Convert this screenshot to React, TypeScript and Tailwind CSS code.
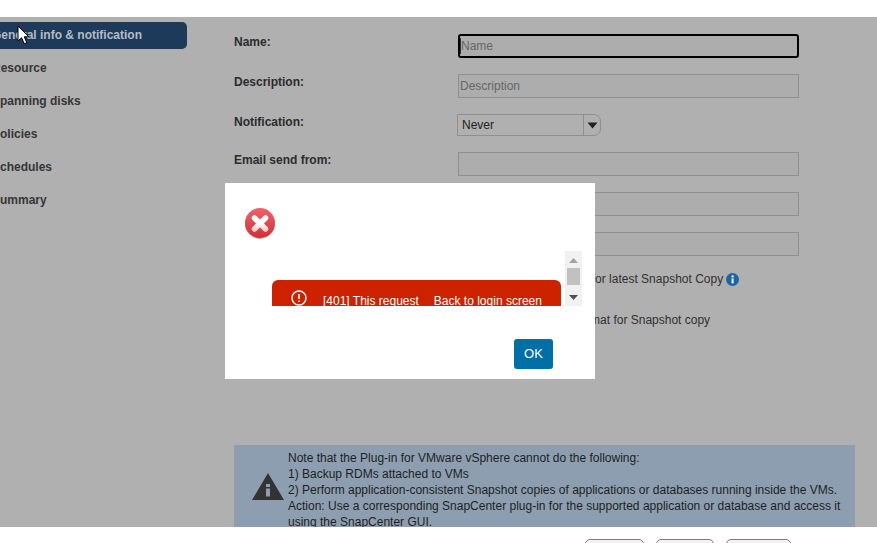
const sideItems = ["Resource", "Spanning disks", "Policies", "Schedules", "Summary"];

const Field = ({ label, placeholder }: { label: string; placeholder?: string }) => (
    <div className="flex items-start mb-[15px]">
        <label className="w-[224px] pt-px font-bold leading-4 text-[#2c2c2c]">{label}</label>
        <input
            placeholder={placeholder}
            className="w-[341px] h-6 mt-px px-[1px] border border-[#8f8f8f] bg-[#adadad] text-xs placeholder:text-[#666666]"
        />
    </div>
);

const ErrorIcon = () => (
    <svg width="32" height="32" viewBox="0 0 32 32">
        <defs>
            <linearGradient id="errorFill" x1="0" y1="0" x2="0" y2="1">
                <stop offset="0" stopColor="#f0636b" />
                <stop offset="1" stopColor="#cf2f36" />
            </linearGradient>
            <linearGradient id="crossFill" gradientUnits="userSpaceOnUse" x1="0" y1="8" x2="0" y2="25">
                <stop offset="0.5" stopColor="#ffffff" />
                <stop offset="1" stopColor="#f2bcbc" />
            </linearGradient>
        </defs>
        <circle cx="16" cy="17" r="15" fill="#b9b9b9" />
        <circle cx="16" cy="16" r="15" fill="url(#errorFill)" />
        <path d="M10.5 11 21.5 22M21.5 11 10.5 22" stroke="url(#crossFill)" strokeWidth="5.5" strokeLinecap="round" />
    </svg>
);

const App = () => {
    return (
        <div className="relative w-[877px] h-[543px] overflow-hidden bg-white text-xs text-[#2c2c2c] font-['Liberation_Sans',Arial,sans-serif]">
            <div className="h-[17px]"></div>

            <div className="flex h-[510px] overflow-hidden bg-[#b0b0b0]">
                <aside className="w-[234px] shrink-0 pt-[5px] -ml-[8px] font-bold">
                    <div className="w-[195px] h-[27px] rounded-[5px] bg-[#1d3a5a] text-[#b5bcc5] leading-[27px]">General info &amp; notification</div>
                    <ul className="mt-[3px]">
                        {sideItems.map((item) => (
                            <li key={item} className="h-[33px] leading-[33px] text-[#363636]">{item}</li>
                        ))}
                    </ul>
                </aside>

                <main className="flex-1 pl-[8px] pt-4">
                    <div className="flex items-start mb-[15px]">
                        <label className="w-[224px] pt-px font-bold leading-4">Name:</label>
                        <div className="relative mt-px">
                            <input
                                placeholder="Name"
                                className="w-[341px] h-6 px-[1px] border-2 border-black rounded-[3px] bg-[#adadad] text-xs placeholder:text-[#666666]"
                            />
                            <span className="absolute left-[2px] top-[4px] w-px h-4 bg-[#333333]"></span>
                        </div>
                    </div>
                    <Field label="Description:" placeholder="Description" />
                    <div className="flex items-start mb-[15px]">
                        <label className="w-[223px] pt-px font-bold leading-4">Notification:</label>
                        <div className="flex w-[144px] h-[22px] mt-px border border-[#8f8f8f] rounded-r-[7px]">
                            <div className="w-[126px] pl-1 leading-5 border-r border-[#8f8f8f] text-[#222222]">Never</div>
                            <div className="flex flex-1 items-center justify-center">
                                <svg width="11" height="7" viewBox="0 0 11 7">
                                    <path d="M0.5 0.5h10L5.5 6.5z" fill="#222222" />
                                </svg>
                            </div>
                        </div>
                    </div>
                    <Field label="Email send from:" />
                    <Field label="Email send to:" />
                    <Field label="Email subject:" />

                    <div className="flex items-center h-4 pl-[229px] mt-[2px] text-[#303030]">
                        <span>Recent Snapshot name for latest Snapshot Copy</span>
                        <svg className="ml-[3px]" width="13" height="13" viewBox="0 0 13 13">
                            <circle cx="6.5" cy="6.5" r="6.5" fill="#1b64a8" />
                            <rect x="5.6" y="2.4" width="2" height="2" fill="#ffffff" />
                            <rect x="5.6" y="5.4" width="2" height="5" fill="#ffffff" />
                        </svg>
                    </div>
                    <div className="h-4 mt-[25px] pl-[242px] leading-4 text-[#303030]">Use custom name format for Snapshot copy</div>

                    <div className="flex items-center w-[621px] h-[110px] mt-[117px] bg-[#8d9eb0] text-[#1f1f1f]">
                        <div className="w-[54px] shrink-0 pl-[18px] -mt-[28px]">
                            <svg width="32" height="28" viewBox="0 0 32 28">
                                <path fillRule="evenodd" fill="#333333" d="M16 1 32 28H0zM14 12v3h4v-3zM14 16.500v8h4v-8z" />
                            </svg>
                        </div>
                        <div className="self-start pt-[5px] leading-4">
                            <p>Note that the Plug-in for VMware vSphere cannot do the following:</p>
                            <p>1) Backup RDMs attached to VMs</p>
                            <p>2) Perform application-consistent Snapshot copies of applications or databases running inside the VMs.</p>
                            <p>Action: Use a corresponding SnapCenter plug-in for the supported application or database and access it using the SnapCenter GUI.</p>
                        </div>
                    </div>
                </main>
            </div>

            <div className="flex gap-3 pl-[585px] pt-3">
                <button className="w-[59px] h-8 shrink-0 border border-[#7c7c7c] rounded-[5px] bg-[#f2f2f2]">Back</button>
                <button className="w-[58px] h-8 shrink-0 border border-[#7c7c7c] rounded-[5px] bg-[#f2f2f2]">Next</button>
                <button className="w-[65px] h-8 shrink-0 border border-[#7c7c7c] rounded-[5px] bg-[#f2f2f2]">Finish</button>
            </div>

            {/* error dialog */}
            <div className="absolute left-[225px] top-[183px] flex flex-col w-[370px] h-[196px] bg-white">
                <div className="h-[32px] mt-6 ml-[19px]">
                    <ErrorIcon />
                </div>
                <div className="flex h-[55px] mt-[12px] ml-[47px]">
                    <div className="w-[293px] pt-[29px] overflow-hidden">
                        <div className="flex items-start w-[289px] h-[60px] pt-[10px] pl-[19px] rounded-t-[6px] bg-[#cc2200] text-white">
                            <svg className="shrink-0" width="16" height="16" viewBox="0 0 16 16" fill="none">
                                <circle cx="8" cy="8" r="7" stroke="#ffffff" strokeWidth="1.4" />
                                <path d="M8 4v5M8 10.5v1.6" stroke="#ffffff" strokeWidth="1.6" />
                            </svg>
                            <span className="ml-[16px] mt-[3px] leading-[16px] whitespace-nowrap">[401] This request</span>
                            <span className="ml-[15px] mt-[3px] leading-[16px] whitespace-nowrap">Back to login screen</span>
                        </div>
                    </div>
                    <div className="flex flex-col items-center w-[17px] h-[55px] bg-[#f1f1f1]">
                        <svg className="mt-[7px]" width="9" height="5" viewBox="0 0 9 5"><path d="M4.5 0 9 5H0z" fill="#a3a3a3" /></svg>
                        <div className="w-[13px] h-[17px] mt-[5px] bg-[#c1c1c1]"></div>
                        <svg className="mt-[10px]" width="9" height="5" viewBox="0 0 9 5"><path d="M0 0h9L4.5 5z" fill="#505050" /></svg>
                    </div>
                </div>
                <button className="self-end w-[39px] h-[30px] mt-[33px] mr-[42px] rounded-[3px] bg-[#006fa6] text-white text-[13px]">OK</button>
            </div>

            {/* mouse pointer */}
            <svg className="absolute left-[17px] top-[25px]" width="13" height="20" viewBox="0 0 13 20">
                <path d="M1 1v15l3.6-3.3 2.6 6 2.6-1.1-2.6-5.8H12z" fill="#ffffff" stroke="#000000" strokeWidth="1" />
            </svg>
        </div>
    );
};

export default App;
